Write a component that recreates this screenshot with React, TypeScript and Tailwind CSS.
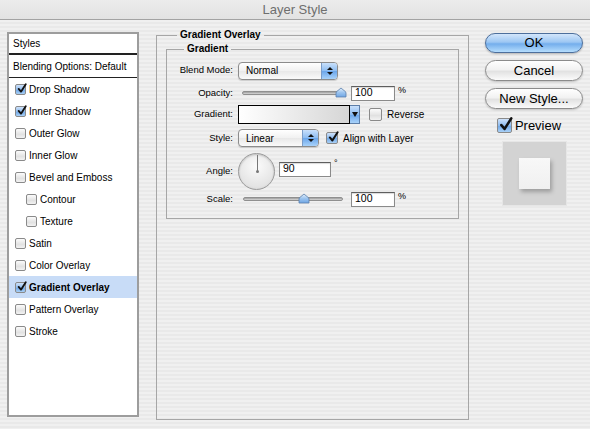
import React from "react";

const font = { fontFamily: '"Liberation Sans", Arial, sans-serif' };

function Check({ checked, size = 12 }: { checked?: boolean; size?: number }) {
  return (
    <span
      className={`relative inline-block shrink-0 rounded-[2px] border border-[#8a8a8a] ${
        checked
          ? "bg-[linear-gradient(to_bottom,#cfe2fa,#8fbcef_50%,#6ea6e6_51%,#a9d0f6)]"
          : "bg-[linear-gradient(to_bottom,#fbfbfb,#e6e6e6_50%,#dedede_51%,#f2f2f2)]"
      }`}
      style={{ width: size, height: size }}
    >
      {checked && (
        <svg
          className="absolute"
          style={{ left: 1, top: -2, width: size - 1, height: size }}
          viewBox="0 0 12 12"
        >
          <path d="M2 6.5 L4.8 9.8 L10.5 0.8" fill="none" stroke="#111" strokeWidth="2.2" strokeLinecap="round" strokeLinejoin="round" />
        </svg>
      )}
    </span>
  );
}

function Row({ label, checked, indent, selected }: { label: string; checked?: boolean; indent?: boolean; selected?: boolean }) {
  return (
    <div className={`flex h-[22px] items-center ${indent ? "pl-[17px]" : "pl-[6px]"} ${selected ? "bg-[#c8dcf7] font-bold" : ""}`}>
      <Check checked={checked} size={11} />
      <span className="ml-[3px] text-[10px] text-black">{label}</span>
    </div>
  );
}

function Select({ value, width }: { value: string; width: number }) {
  return (
    <div
      className="flex h-[18px] items-stretch overflow-hidden rounded-[4px] border border-[#8c8c8c] bg-[linear-gradient(to_bottom,#ffffff,#f1f1f1_50%,#e8e8e8_51%,#fafafa)] shadow-[0_1px_1px_rgba(0,0,0,0.15)]"
      style={{ width }}
    >
      <span className="flex flex-1 items-center pl-[7px] text-[10px] text-black">{value}</span>
      <span className="flex w-[16px] flex-col items-center justify-center gap-[2px] border-l border-[#7a9cc8] bg-[linear-gradient(to_bottom,#c9e0fb,#8cbcf1_50%,#6aa5ea_51%,#a8d2fa)]">
        <svg width="6" height="3" viewBox="0 0 6 3"><path d="M0 3 L3 0 L6 3Z" fill="#111" /></svg>
        <svg width="6" height="3" viewBox="0 0 6 3"><path d="M0 0 L3 3 L6 0Z" fill="#111" /></svg>
      </span>
    </div>
  );
}

function Input({ value, width }: { value: string; width: number }) {
  return (
    <div
      className="flex h-[15px] items-center border border-[#8a8a8a] border-t-[#5e5e5e] bg-white pl-[3px] text-[10.5px] text-black shadow-[inset_0_1px_1px_rgba(0,0,0,0.15)]"
      style={{ width }}
    >
      {value}
    </div>
  );
}

function Slider({ pos, width }: { pos: number; width: number }) {
  return (
    <div className="relative h-[14px]" style={{ width }}>
      <div className="absolute left-0 right-0 top-[5px] h-[4px] rounded-full border border-[#8f8f8f] bg-[linear-gradient(to_bottom,#9b9b9b,#d8d8d8)]" />
      <svg className="absolute top-[1px]" style={{ left: pos - 6 }} width="12" height="11" viewBox="0 0 12 11">
        <defs>
          <linearGradient id={`tg${pos}`} x1="0" y1="0" x2="0" y2="1">
            <stop offset="0" stopColor="#e4f0fc" />
            <stop offset="0.5" stopColor="#9cc4ef" />
            <stop offset="1" stopColor="#6fa6e4" />
          </linearGradient>
        </defs>
        <path d="M1 10 L1 6 Q1 4.5 3 3.5 L6 1 L9 3.5 Q11 4.5 11 6 L11 10 Z" fill={`url(#tg${pos})`} stroke="#5a7fab" strokeWidth="0.8" />
      </svg>
    </div>
  );
}

function Label({ children }: { children: React.ReactNode }) {
  return <span className="w-[66px] shrink-0 text-right text-[9.5px] text-black">{children}</span>;
}

export default function App() {
  return (
    <div
      className="relative h-[429px] w-[590px] overflow-hidden bg-[repeating-linear-gradient(to_bottom,#f0f0f0_0px,#f0f0f0_2px,#e9e9e9_2px,#e9e9e9_4px)] text-black"
      style={font}
    >
      {/* title bar */}
      <div className="flex h-[20px] items-center justify-center border-b border-[#a3a3a3] bg-[linear-gradient(to_bottom,#ececec,#e2e2e2)] text-[13px] text-[#6e6e6e]">
        Layer Style
      </div>

      <div className="flex pl-[7px] pt-[8px]">
        {/* left list */}
        <div className="mt-[4px] h-[385px] w-[132px] border-2 border-[#9d9d9d] bg-white">
          <div className="flex h-[21px] items-center border-b-2 border-[#222] pl-[4px] text-[10px]">Styles</div>
          <div className="flex h-[23px] items-center border-b border-[#222] pl-[4px] text-[10px]">Blending Options: Default</div>
          <Row label="Drop Shadow" checked />
          <Row label="Inner Shadow" checked />
          <Row label="Outer Glow" />
          <Row label="Inner Glow" />
          <Row label="Bevel and Emboss" />
          <Row label="Contour" indent />
          <Row label="Texture" indent />
          <Row label="Satin" />
          <Row label="Color Overlay" />
          <Row label="Gradient Overlay" checked selected />
          <Row label="Pattern Overlay" />
          <Row label="Stroke" />
        </div>

        {/* middle */}
        <fieldset className="ml-[17px] h-[392px] w-[313px] border border-[#a6a6a6] px-[9px]">
          <legend className="ml-[11px] px-[3px] text-[10px] font-bold leading-[14px]">Gradient Overlay</legend>
          <fieldset className="h-[177px] border border-[#a6a6a6] pt-[5px]">
            <legend className="ml-[17px] px-[3px] text-[10px] font-bold leading-[14px]">Gradient</legend>

            <div className="flex h-[19px] items-center gap-[5px]">
              <Label>Blend Mode:</Label>
              <Select value="Normal" width={100} />
            </div>

            <div className="mt-[4px] flex h-[18px] items-center">
              <Label>Opacity:</Label>
              <div className="ml-[9px]">
                <Slider pos={99} width={100} />
              </div>
              <div className="ml-[9px]">
                <Input value="100" width={44} />
              </div>
              <span className="ml-[3px] -mt-[5px] text-[9px]">%</span>
            </div>

            <div className="mt-[2px] flex h-[20px] items-center">
              <Label>Gradient:</Label>
              <div className="ml-[5px] flex h-[19px]">
                <div className="w-[112px] border border-black bg-[linear-gradient(to_right,#ffffff,#d6d6d6)]" />
                <div className="flex w-[10px] items-center justify-center border border-l-0 border-[#5d7ea8] bg-[linear-gradient(to_bottom,#c9e0fb,#8cbcf1_50%,#6aa5ea_51%,#a8d2fa)]">
                  <svg width="6" height="5" viewBox="0 0 6 5"><path d="M0 0 L3 5 L6 0Z" fill="#111" /></svg>
                </div>
              </div>
              <div className="ml-[9px] flex items-center">
                <Check size={13} />
                <span className="ml-[5px] text-[10px]">Reverse</span>
              </div>
            </div>

            <div className="mt-[5px] flex h-[18px] items-center">
              <Label>Style:</Label>
              <div className="ml-[5px]">
                <Select value="Linear" width={81} />
              </div>
              <div className="ml-[7px] flex items-center">
                <Check checked size={12} />
                <span className="ml-[5px] text-[10px]">Align with Layer</span>
              </div>
            </div>

            <div className="mt-[5px] flex h-[38px] items-center">
              <Label>Angle:</Label>
              <div className="relative ml-[5px] h-[37px] w-[37px] rounded-full border border-[#9a9a9a] bg-[radial-gradient(circle_at_50%_35%,#fbfbfb,#e4e4e4_70%,#cfcfcf)] shadow-[inset_0_1px_2px_rgba(0,0,0,0.2)]">
                <div className="absolute left-[17.5px] top-[1px] h-[17px] w-[1px] bg-[#777]" />
                <div className="absolute left-[16.5px] top-[16.5px] h-[3px] w-[3px] rounded-full bg-[#777]" />
              </div>
              <div className="ml-[4px] mt-[-4px]">
                <Input value="90" width={52} />
              </div>
              <span className="ml-[3px] -mt-[14px] text-[9px]">°</span>
            </div>

            <div className="mt-[1px] flex h-[16px] items-center">
              <Label>Scale:</Label>
              <div className="ml-[10px]">
                <Slider pos={61} width={100} />
              </div>
              <div className="ml-[8px]">
                <Input value="100" width={44} />
              </div>
              <span className="ml-[3px] -mt-[5px] text-[9px]">%</span>
            </div>
          </fieldset>
        </fieldset>

        {/* right column */}
        <div className="ml-[16px] mt-[5px] flex w-[98px] flex-col items-center">
          <button className="flex h-[20px] w-[98px] items-center justify-center rounded-full border border-[#4d6f9c] bg-[linear-gradient(to_bottom,#d3e6fb,#9dc7f3_45%,#74aeec_55%,#b5ddfd)] text-[13px] text-black shadow-[0_1px_2px_rgba(0,0,0,0.25)]">
            OK
          </button>
          <button className="mt-[7px] flex h-[21px] w-[98px] items-center justify-center rounded-full border border-[#8b8b8b] bg-[linear-gradient(to_bottom,#ffffff,#f2f2f2_45%,#e2e2e2_55%,#fbfbfb)] text-[13px] text-black shadow-[0_1px_2px_rgba(0,0,0,0.2)]">
            Cancel
          </button>
          <button className="mt-[7px] flex h-[21px] w-[98px] items-center justify-center rounded-full border border-[#8b8b8b] bg-[linear-gradient(to_bottom,#ffffff,#f2f2f2_45%,#e2e2e2_55%,#fbfbfb)] text-[13px] text-black shadow-[0_1px_2px_rgba(0,0,0,0.2)]">
            New Style...
          </button>
          <div className="mt-[7px] flex items-center pr-[10px]">
            <Check checked size={15} />
            <span className="ml-[3px] text-[13px]">Preview</span>
          </div>
          <div className="mt-[5px] flex h-[65px] w-[65px] items-center justify-center border border-[#e6e6e6] bg-[#d3d3d3]">
            <div className="h-[31px] w-[31px] bg-[linear-gradient(to_bottom,#f8f8f8,#f0f0f0)] shadow-[2px_3px_4px_rgba(0,0,0,0.25)]" />
          </div>
        </div>
      </div>
    </div>
  );
}
